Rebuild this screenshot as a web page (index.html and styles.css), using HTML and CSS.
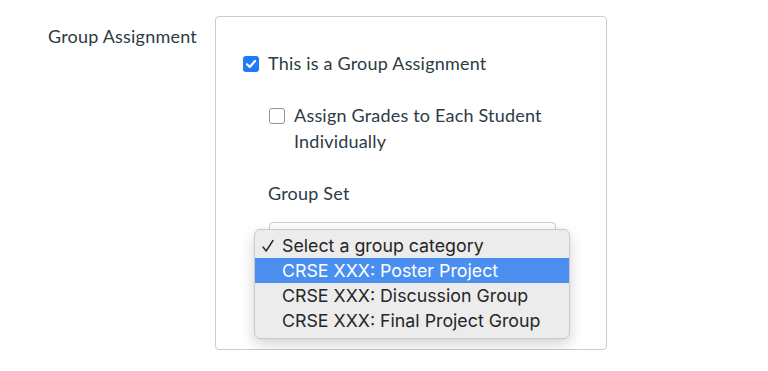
FILE: index.html
```html
<!DOCTYPE html>
<html lang="en">
<head>
    <meta charset="UTF-8">
    <meta name="viewport" content="width=device-width, initial-scale=1.0">
    <title>Group Assignment</title>
    <link rel="stylesheet" href="styles.css">
</head>
<body>
    <div class="row">
        <div class="boxleft">Group Assignment</div>
        <div class="boxright">
            <div class="check">
                <span class="box checked">
                    <svg width="16" height="16" viewBox="0 0 16 16"><path d="M4 8.3 L6.8 11 L12 5" fill="none" stroke="#fff" stroke-width="2.2" stroke-linecap="round" stroke-linejoin="round"/></svg>
                </span>
                <span class="text">This is a Group Assignment</span>
            </div>
            <div class="sub">
                <div class="check">
                    <span class="box"></span>
                    <span class="text">Assign Grades to Each Student<br>Individually</span>
                </div>
                <div class="label">Group Set</div>
                <div class="selectwrap">
                    <div class="select"></div>
                    <!-- menu dang mo -->
                    <ul class="menu">
                        <li>
                            <svg class="tick" width="12" height="14" viewBox="0 0 12 14"><path d="M1 8 L4.2 12 L11 1.5" fill="none" stroke="#262626" stroke-width="1.4" stroke-linecap="round" stroke-linejoin="round"/></svg>
                            Select a group category
                        </li>
                        <li class="active">CRSE XXX: Poster Project</li>
                        <li>CRSE XXX: Discussion Group</li>
                        <li>CRSE XXX: Final Project Group</li>
                    </ul>
                </div>
            </div>
        </div>
    </div>
</body>
</html>
```

FILE: styles.css
```css
body{
    margin: 0;
    font-family: Lato, "Open Sans", sans-serif;
    font-size: 18px;
    letter-spacing: 0.2px;
    color: #2d3b45;
    background: #fff;
}
.row{
    display: flex;
    padding-top: 16px;
}
.boxleft{
    width: 148px;
    margin-left: 48px;
    margin-right: 19px;
    padding-top: 8px;
    line-height: 24px;
    white-space: nowrap;
}
.boxright{
    width: 392px;
    height: 334px;
    border: 1px solid #c7cdd1;
    border-radius: 4px;
    padding: 33px 0 0 27px;
    box-sizing: border-box;
}
.check{
    display: flex;
    align-items: flex-start;
    line-height: 26px;
}
.box{
    width: 16px;
    height: 16px;
    flex: none;
    margin-top: 6px;
    margin-right: 9px;
    border: 1px solid #8d959a;
    border-radius: 3px;
    box-sizing: border-box;
    background: #fff;
}
.box.checked{
    border: none;
    background: #1f7bf6;
}
.box svg{
    display: block;
}
.sub{
    padding-left: 26px;
    margin-top: 26px;
}
.label{
    margin-top: 26px;
    margin-left: -1px;
    line-height: 26px;
}
.selectwrap{
    position: relative;
    margin-top: 16px;
    width: 287px;
}
.select{
    height: 38px;
    border: 1px solid #c7cdd1;
    border-radius: 4px;
    background: linear-gradient(#fff, #f5f5f5);
}
.menu{
    position: absolute;
    left: -15px;
    top: 7px;
    width: 316px;
    margin: 0;
    padding: 3px 0 5px;
    list-style: none;
    box-sizing: border-box;
    background: #ececec;
    border: 1px solid #c9c9c9;
    border-radius: 6px;
    box-shadow: 0 5px 14px rgba(0,0,0,0.18);
    font-family: Inter, Roboto, sans-serif;
    font-size: 17.8px;
    letter-spacing: 0;
    color: #262626;
}
.menu li{
    position: relative;
    height: 25px;
    line-height: 25px;
    padding-left: 27px;
}
.menu li.active{
    background: #4a8ff0;
    color: #fff;
}
.tick{
    position: absolute;
    left: 7px;
    top: 6px;
}
```
